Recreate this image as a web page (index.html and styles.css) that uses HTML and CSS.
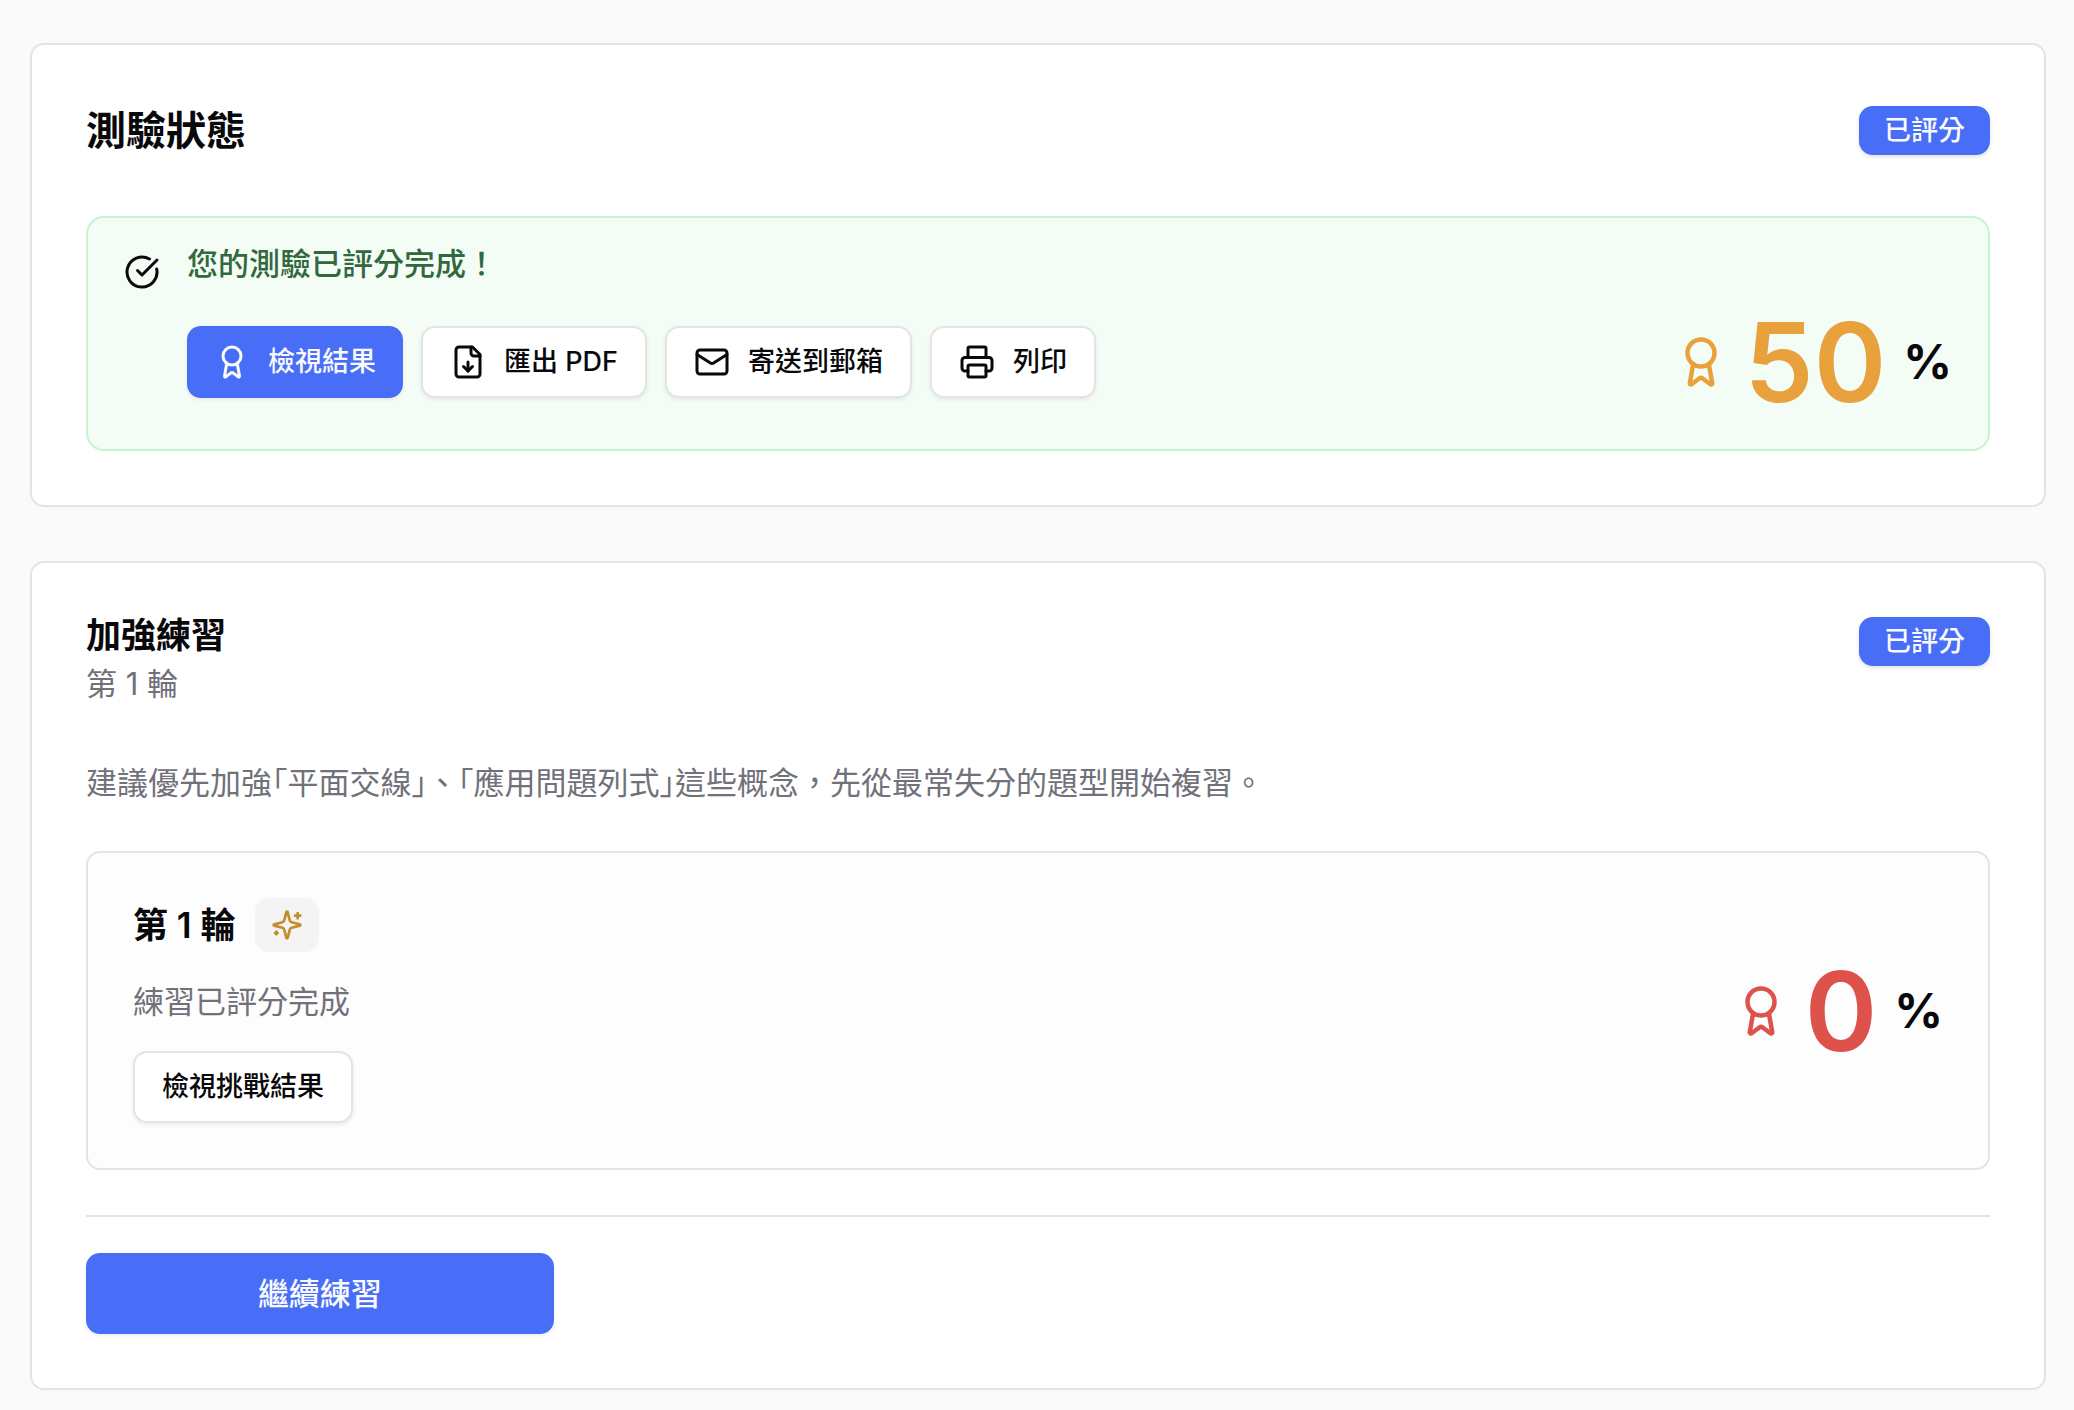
FILE: index.html
```html
<!DOCTYPE html>
<html lang="zh-Hant">
<head>
  <meta charset="UTF-8">
  <meta name="viewport" content="width=device-width, initial-scale=1.0">
  <title>測驗狀態</title>
  <link rel="stylesheet" href="styles.css">
</head>
<body>

  <!-- Shared icon shapes -->
  <svg class="icon-defs" aria-hidden="true">
    <symbol id="icon-award" viewBox="0 0 24 24">
      <path d="m15.477 12.89 1.515 8.526a.5.5 0 0 1-.81.47l-3.58-2.687a1 1 0 0 0-1.197 0l-3.586 2.686a.5.5 0 0 1-.81-.469l1.514-8.526"/>
      <circle cx="12" cy="8" r="6"/>
    </symbol>
  </svg>

  <main class="page">

    <section class="card">
      <div class="card-header status-header">
        <h2 class="status-title">測驗狀態</h2>
        <span class="badge">已評分</span>
      </div>

      <div class="alert">
        <svg class="icon alert-icon" viewBox="0 0 24 24" aria-hidden="true">
          <path d="M21.801 10A10 10 0 1 1 17 3.335"/>
          <path d="m9 11 3 3L22 4"/>
        </svg>
        <div class="alert-body">
          <p class="alert-text">您的測驗已評分完成！</p>
          <div class="alert-row">
            <div class="actions">
              <button type="button" class="btn btn-primary">
                <svg class="icon" aria-hidden="true"><use href="#icon-award"/></svg>
                檢視結果
              </button>
              <button type="button" class="btn btn-outline">
                <svg class="icon" viewBox="0 0 24 24" aria-hidden="true">
                  <path d="M15 2H6a2 2 0 0 0-2 2v16a2 2 0 0 0 2 2h12a2 2 0 0 0 2-2V7Z"/>
                  <path d="M14 2v4a2 2 0 0 0 2 2h4"/>
                  <path d="M12 18v-6"/>
                  <path d="m9 15 3 3 3-3"/>
                </svg>
                匯出 PDF
              </button>
              <button type="button" class="btn btn-outline">
                <svg class="icon" viewBox="0 0 24 24" aria-hidden="true">
                  <rect x="2" y="4" width="20" height="16" rx="2"/>
                  <path d="m22 7-8.97 5.7a1.94 1.94 0 0 1-2.06 0L2 7"/>
                </svg>
                寄送到郵箱
              </button>
              <button type="button" class="btn btn-outline">
                <svg class="icon" viewBox="0 0 24 24" aria-hidden="true">
                  <path d="M6 18H4a2 2 0 0 1-2-2v-5a2 2 0 0 1 2-2h16a2 2 0 0 1 2 2v5a2 2 0 0 1-2 2h-2"/>
                  <path d="M6 9V3a1 1 0 0 1 1-1h10a1 1 0 0 1 1 1v6"/>
                  <rect x="6" y="14" width="12" height="8" rx="1"/>
                </svg>
                列印
              </button>
            </div>
            <div class="score score-medium">
              <svg class="icon score-icon" aria-hidden="true"><use href="#icon-award"/></svg>
              <span class="score-value">50</span>
              <span class="score-unit">%</span>
            </div>
          </div>
        </div>
      </div>
    </section>

    <section class="card">
      <div class="card-header">
        <div>
          <h3 class="practice-title">加強練習</h3>
          <p class="practice-round">第 1 輪</p>
        </div>
        <span class="badge">已評分</span>
      </div>

      <p class="advice">建議優先加強<span class="half">「</span>平面交線<span class="half">」</span>、<span class="half">「</span>應用問題列式<span class="half">」</span>這些概念，先從最常失分的題型開始複習。</p>

      <div class="round">
        <div class="round-info">
          <div class="round-heading">
            <h4 class="round-title">第 1 輪</h4>
            <span class="chip">
              <svg class="icon chip-icon" viewBox="0 0 24 24" aria-hidden="true">
                <path d="M9.937 15.5A2 2 0 0 0 8.5 14.063l-6.135-1.582a.5.5 0 0 1 0-.962L8.5 9.936A2 2 0 0 0 9.937 8.5l1.582-6.135a.5.5 0 0 1 .963 0L14.063 8.5A2 2 0 0 0 15.5 9.937l6.135 1.581a.5.5 0 0 1 0 .964L15.5 14.063a2 2 0 0 0-1.437 1.437l-1.582 6.135a.5.5 0 0 1-.963 0z"/>
                <path d="M20 3v4"/>
                <path d="M22 5h-4"/>
                <path d="M4 17v2"/>
                <path d="M5 18H3"/>
              </svg>
            </span>
          </div>
          <p class="round-text">練習已評分完成</p>
          <button type="button" class="btn btn-outline">檢視挑戰結果</button>
        </div>
        <div class="score score-low">
          <svg class="icon score-icon" aria-hidden="true"><use href="#icon-award"/></svg>
          <span class="score-value">0</span>
          <span class="score-unit">%</span>
        </div>
      </div>

      <div class="card-footer">
        <button type="button" class="btn btn-primary btn-large">繼續練習</button>
      </div>
    </section>

  </main>

</body>
</html>
```

FILE: styles.css
```css
* {
  box-sizing: border-box;
}

body {
  margin: 0;
  background-color: #fafafa;
  color: #09090b;
  font-family: Inter, "Noto Sans CJK TC", sans-serif;
  font-size: 31px;
  line-height: 45px;
}

h2, h3, h4, p {
  margin: 0;
}

.icon-defs {
  display: none;
}

.page {
  display: flex;
  flex-direction: column;
  gap: 54px;
  padding: 43px 28px 20px 30px;
}

.card {
  padding: 54px;
  background-color: #fff;
  border: 2px solid #e4e4e7;
  border-radius: 14px;
}

.card-header {
  display: flex;
  justify-content: space-between;
  align-items: flex-start;
  margin-bottom: 54px;
}

/* Status header has more room around its title */
.status-header {
  align-items: center;
  padding: 7px 0;
}

.status-title {
  font-size: 40px;
  font-weight: 600;
  line-height: 49px;
}

.badge {
  padding: 0 25px;
  border-radius: 14px;
  background-color: #486ef8;
  color: #fafafa;
  font-size: 27px;
  font-weight: 500;
  line-height: 49px;
  box-shadow: 0 2px 4px rgba(0, 0, 0, 0.12);
}

/* Icons */
.icon {
  flex: none;
  width: 36px;
  height: 36px;
  fill: none;
  stroke: currentColor;
  stroke-width: 2;
  stroke-linecap: round;
  stroke-linejoin: round;
}

/* Buttons */
.btn {
  display: inline-flex;
  align-items: center;
  justify-content: center;
  gap: 18px;
  height: 72px;
  padding: 0 27px;
  border: 0;
  border-radius: 14px;
  font-family: inherit;
  font-size: 27px;
  font-weight: 500;
  line-height: 36px;
  white-space: nowrap;
  cursor: pointer;
  box-shadow: 0 2px 4px rgba(0, 0, 0, 0.07);
}

.btn-primary {
  background-color: #486ef8;
  color: #fafafa;
}

.btn-outline {
  border: 2px solid #e4e4e7;
  background-color: #fff;
  color: #09090b;
}

.btn-large {
  height: 81px;
  font-size: 31px;
}

/* Graded message */
.alert {
  display: flex;
  gap: 27px;
  padding: 27px 36px;
  border: 2px solid #c4f5d1;
  border-radius: 18px;
  background-color: #f3fdf5;
}

.alert-icon {
  margin-top: 9px;
}

.alert-body {
  flex: 1;
}

.alert-text {
  margin-bottom: 19px;
  color: #32683d;
  font-weight: 500;
  line-height: 38px;
}

.alert-row {
  display: flex;
  align-items: center;
  justify-content: space-between;
}

.actions {
  display: flex;
  flex-wrap: wrap;
  gap: 18px;
}

/* Score */
.score {
  display: flex;
  align-items: center;
  gap: 17px;
  font-weight: 600;
}

.score-icon {
  width: 54px;
  height: 54px;
}

.score-value {
  font-size: 110px;
  line-height: 120px;
}

.score-unit {
  color: #09090b;
  font-size: 48px;
  font-weight: 700;
  line-height: 54px;
}

.score-medium {
  color: #e8a13c;
}

.score-low {
  color: #de524c;
}

/* Practice */
.practice-title {
  font-size: 35px;
  font-weight: 600;
  line-height: 36px;
}

.practice-round {
  margin-top: 8px;
  color: #71717a;
}

.advice {
  margin-bottom: 46px;
  color: #71717a;
}

/* Half-width corner brackets */
.half {
  font-feature-settings: "halt";
}

.round {
  display: flex;
  align-items: center;
  justify-content: space-between;
  padding: 45px;
  border: 2px solid #e4e4e7;
  border-radius: 14px;
  background-color: #fdfdfd;
}

.round-info {
  display: flex;
  flex-direction: column;
  align-items: flex-start;
  gap: 27px;
}

.round-heading {
  display: flex;
  align-items: center;
  gap: 20px;
}

.round-title {
  font-size: 35px;
  font-weight: 600;
}

.round-text {
  color: #71717a;
}

.chip {
  display: flex;
  padding: 11px 16px;
  border-radius: 14px;
  background-color: #f4f4f5;
  color: #c28e2c;
}

.chip-icon {
  width: 32px;
  height: 32px;
}

.card-footer {
  display: grid;
  grid-template-columns: repeat(4, 1fr);
  gap: 11px;
  margin-top: 45px;
  padding-top: 36px;
  border-top: 2px solid #e4e4e7;
}
```
